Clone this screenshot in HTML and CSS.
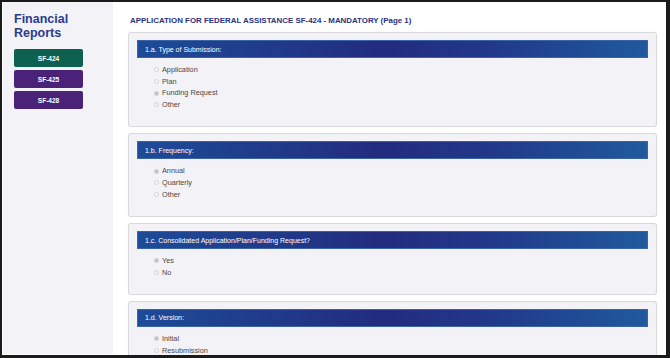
FILE: index.html
```html
<!DOCTYPE html>
<html>
<head>
<meta charset="utf-8">
<link rel="stylesheet" href="styles.css">
</head>
<body>
<div class="frame">
  <aside class="sidebar">
    <h1 class="side-title">Financial<br>Reports</h1>
    <nav class="side-nav">
      <a class="side-btn active">SF-424</a>
      <a class="side-btn">SF-425</a>
      <a class="side-btn">SF-428</a>
    </nav>
  </aside>
  <main class="main">
    <h2 class="page-title">APPLICATION FOR FEDERAL ASSISTANCE SF-424 - MANDATORY (Page 1)</h2>
    <section class="card">
      <div class="card-head">1.a. Type of Submission:</div>
      <ul class="opts">
        <li><span class="radio"></span>Application</li>
        <li><span class="radio"></span>Plan</li>
        <li><span class="radio on"></span>Funding Request</li>
        <li><span class="radio"></span>Other</li>
      </ul>
    </section>
    <section class="card">
      <div class="card-head">1.b. Frequency:</div>
      <ul class="opts">
        <li><span class="radio on"></span>Annual</li>
        <li><span class="radio"></span>Quarterly</li>
        <li><span class="radio"></span>Other</li>
      </ul>
    </section>
    <section class="card">
      <div class="card-head">1.c. Consolidated Application/Plan/Funding Request?</div>
      <ul class="opts">
        <li><span class="radio on"></span>Yes</li>
        <li><span class="radio"></span>No</li>
      </ul>
    </section>
    <section class="card">
      <div class="card-head">1.d. Version:</div>
      <ul class="opts">
        <li><span class="radio on"></span>Initial</li>
        <li><span class="radio"></span>Resubmission</li>
        <li><span class="radio"></span>Revision</li>
      </ul>
    </section>
  </main>
</div>
</body>
</html>
```
FILE: styles.css
```css
* { box-sizing: border-box; }
html, body { margin: 0; padding: 0; background: #1b1b1b; }
body { width: 670px; height: 358px; overflow: hidden; font-family: "Liberation Sans", Arial, sans-serif; }
.frame {
  width: 670px; height: 358px;
  border-style: solid; border-color: #1b1b1b;
  border-width: 2px 4px 3px 2px;
  background: #fff;
  display: flex;
  padding: 0 0 1px 1px;
  overflow: hidden;
}
.sidebar {
  width: 110px; flex: none;
  background: #f2f2f7;
  padding: 10px 0 0 11px;
}
.side-title {
  margin: 0;
  font-size: 12.5px; line-height: 14px; font-weight: bold;
  color: #2c3a8e;
}
.side-nav { display: flex; flex-direction: column; gap: 3px; margin-top: 9px; }
.side-btn {
  width: 69px; height: 18px;
  display: flex; align-items: center; justify-content: center;
  background: #4a2379; color: #fff;
  font-size: 6.5px; font-weight: bold;
  border-radius: 2px;
}
.side-btn.active { background: #0e6150; }
.main {
  flex: 1; min-width: 0;
  padding: 13px 9px 0 15px;
  display: flex; flex-direction: column; gap: 6px;
}
.page-title {
  margin: 0 0 0 2px;
  font-size: 7.9px; line-height: 11px; font-weight: bold;
  color: #2a2f80;
}
.card {
  flex: none;
  background: #f2f2f7;
  border: 1px solid #d8d8dd;
  border-radius: 3px;
  box-shadow: 0 0 1px rgba(0,0,0,0.08);
  padding: 7px 8px 15.6px 8px;
}
.card-head {
  height: 18px;
  display: flex; align-items: center;
  padding-left: 7px;
  color: #fff; font-size: 7px;
  background: linear-gradient(90deg, #1d4b98 0%, #232c7e 48%, #22378a 68%, #1f5a9c 100%);
  border: 1px solid #3a63a8;
}
.opts { list-style: none; margin: 6px 0 0 0; padding: 0 0 0 17px; }
.opts li {
  height: 11.7px; line-height: 11.7px;
  font-size: 7.3px; color: #484848;
  display: flex; align-items: center;
}
.radio {
  width: 5px; height: 5px;
  border: 1px solid #d2d2d6; border-radius: 50%;
  background: #f7f7fa;
  margin-right: 3px;
  flex: none;
}
.radio.on { background: #c4c4c8; border-color: #d0d0d4; }
```
